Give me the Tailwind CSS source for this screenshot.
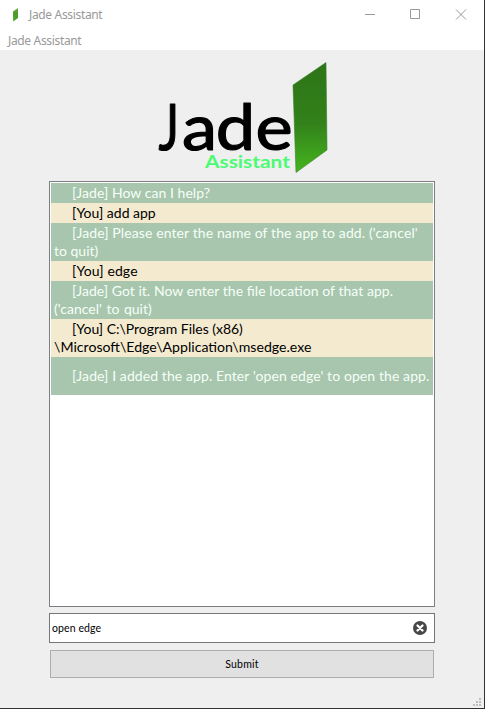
<!DOCTYPE html>
<html lang="en"><head><meta charset="utf-8"><title>Jade Assistant</title>
<script src="https://cdn.jsdelivr.net/npm/@tailwindcss/browser@4"></script></head>
<body class="w-[485px] h-[709px] overflow-hidden font-['Lato',sans-serif]">
<main class="w-[485px] h-[709px] flex flex-col bg-[#efefef] border-r border-b border-[#333]">
<header class="h-[30px] shrink-0 bg-white flex items-center text-[#999]">
<svg class="ml-[12px] w-[8px] h-[16px]" viewBox="0 0 8 16"><defs><linearGradient id="g" x1="0" y1="0" x2="0" y2="1"><stop offset="0" stop-color="#2d7417"/><stop offset=".55" stop-color="#32811a"/><stop offset="1" stop-color="#45b51f"/></linearGradient><linearGradient id="s" x1="0" y1="0" x2="0" y2="1"><stop offset="0" stop-color="#69ac45"/><stop offset=".4" stop-color="#4c9a2c"/><stop offset="1" stop-color="#45a51f"/></linearGradient></defs><path d="M1 4.500 6 1V11L1.200 14.500Z" fill="url(#s)"/></svg>
<span class="ml-[9px] font-['Noto_Sans',sans-serif] text-[12px] tracking-[-0.34px] whitespace-nowrap">Jade Assistant</span>
<svg class="ml-auto mr-[16px] w-[104px] h-[12px]" viewBox="0 0 104 12" fill="none" stroke="#999"><path d="M1 5.500H11M46.500 .5H55.500V9.500H46.500ZM92 .5 102 10.500M102 .5 92 10.500"/></svg>
</header>
<nav class="h-[20px] shrink-0 bg-white pl-[8px] font-['Noto_Sans',sans-serif] text-[12px] leading-[21px] tracking-[-0.34px] text-[#999]">Jade Assistant</nav>
<svg class="ml-[150px] mt-[5px] w-[190px] h-[125px] shrink-0" viewBox="0 0 190 125" font-family="Lato, sans-serif">
<g font-size="64" stroke="#000" stroke-width="1.200" stroke-linejoin="round"><text transform="translate(8.500 95.300) scale(.76 1)">J</text><text transform="translate(0 95.300) scale(1.1 1)" x="29 59.800 95.800">ade</text></g>
<text x="55" y="112.500" font-size="16.500" font-weight="700" textLength="85" lengthAdjust="spacingAndGlyphs" fill="#4dfa74">Assistant</text>
<path d="M143 30 176 7.500 177 95 146 117.500Z" fill="url(#g)" stroke="#3b7d27" stroke-width=".6"/></svg>
<section class="ml-[49px] mt-px w-[386px] h-[426px] shrink-0 border border-[#7b7f83] bg-white p-px text-[14px] leading-[18px] whitespace-nowrap">
<div class="h-[20px] bg-[#a8c6ae] text-[#f5fff7] pl-[21px] pt-px tracking-[0.05px]">[Jade] How can I help?</div>
<div class="h-[20px] bg-[#f4ead0] text-black pl-[21px] pt-px">[You] add app</div>
<div class="h-[38px] bg-[#a8c6ae] text-[#f5fff7] pl-[3px] pt-px"><div class="pl-[18px] tracking-[0.11px]">[Jade] Please enter the name of the app to add. ('cancel'</div><div>to quit)</div></div>
<div class="h-[20px] bg-[#f4ead0] text-black pl-[21px] pt-px tracking-[0.1px]">[You] edge</div>
<div class="h-[38px] bg-[#a8c6ae] text-[#f5fff7] pl-[3px] pt-px"><div class="pl-[18px] [word-spacing:0.2px]">[Jade] Got it. Now enter the file location of that app.</div><div class="[word-spacing:1px]">('cancel' to quit)</div></div>
<div class="h-[38px] bg-[#f4ead0] text-black pl-[3px] pt-px"><div class="pl-[18px] tracking-[-0.03px]">[You] C:\Program Files (x86)</div><div class="text-[14.130px]">\Microsoft\Edge\Application\msedge.exe</div></div>
<div class="h-[38px] bg-[#a8c6ae] text-[#f5fff7] pl-[21px] pt-[10px] tracking-[0.09px]">[Jade] I added the app. Enter 'open edge' to open the app.</div>
</section>
<div class="ml-[49px] mt-[6px] w-[386px] h-[30px] shrink-0 border border-[#76777a] bg-white flex items-center justify-between pl-[2px] pr-[7px] text-[10.5px]"><span class="pt-[2px] tracking-[0.1px]">open edge</span>
<svg class="w-[14px] h-[14px]" viewBox="0 0 14 14"><circle cx="7" cy="7" r="7" fill="#474747"/><path d="m4.500 4.500 5 5m0-5-5 5" stroke="white" stroke-width="2.300" stroke-linecap="round"/></svg></div>
<button class="ml-[50px] mt-[7px] w-[384px] h-[28px] shrink-0 border border-[#adadad] bg-[#e1e1e1] text-[10.5px] tracking-[0.2px] pt-[2px]">Submit</button>
<svg class="ml-auto mt-auto mr-[3px] mb-[2px] w-[8px] h-[8px]" viewBox="0 0 8 8" fill="#bdbdbd"><path d="M6 0h2v2H6zM3 3h2v2H3zM6 3h2v2H6zM0 6h2v2H0zM3 6h2v2H3zM6 6h2v2H6z"/></svg>
</main></body></html>
